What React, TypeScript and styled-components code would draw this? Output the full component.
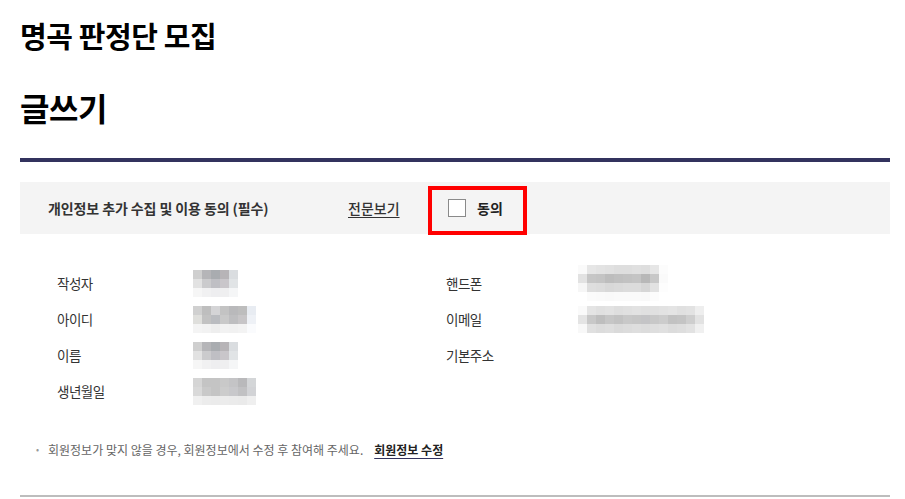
import React from "react";
import styled, { createGlobalStyle } from "styled-components";

const Global = createGlobalStyle`
  html, body { margin: 0; padding: 0; background: #fff; }
  body { font-family: "Noto Sans CJK KR", "Noto Sans", sans-serif; color: #222; }
`;

const Page = styled.div`
  width: 870px;
  margin-left: 20px;
`;

const Title = styled.h1`
  margin: 0;
  padding-top: 13px;
  font-size: 29px;
  font-weight: 700;
  line-height: 44px;
  letter-spacing: -0.4px;
  color: #000;
`;

const SubTitle = styled.h2`
  margin: 0;
  padding-top: 26px;
  font-size: 32px;
  font-weight: 700;
  line-height: 48px;
  letter-spacing: -0.5px;
  color: #000;
`;

const Divider = styled.div`
  margin-top: 27px;
  height: 4px;
  background: #33335e;
`;

const AgreeBar = styled.div`
  margin-top: 20px;
  height: 52px;
  background: #f4f4f4;
  display: flex;
  align-items: center;
  padding-left: 28px;
`;

const AgreeLabel = styled.span`
  width: 300px;
  font-size: 14px;
  font-weight: 700;
  color: #333;
  letter-spacing: -0.1px;
`;

const FullLink = styled.a`
  width: 100px;
  font-size: 14px;
  font-weight: 500;
  color: #333;
  text-decoration: underline;
  text-underline-offset: 3px;
`;

const CheckGroup = styled.label`
  position: relative;
  display: flex;
  align-items: center;
  gap: 11px;
  font-size: 14px;
  font-weight: 700;
  color: #222;
`;

const Box = styled.span`
  width: 16px;
  height: 16px;
  border: 1px solid #8a8a8a;
  background: #fff;
`;

const RedFrame = styled.span`
  position: absolute;
  left: -20px;
  top: -12px;
  width: 91px;
  height: 41px;
  border: 4px solid #ff0000;
  pointer-events: none;
`;

const Fields = styled.div`
  padding: 31px 0 0 37px;
  display: grid;
  grid-template-columns: 389px 1fr;
`;

const Column = styled.div`
  display: flex;
  flex-direction: column;
`;

const Row = styled.div`
  display: flex;
  align-items: center;
  height: 36px;
`;

const Label = styled.span<{ $w: number }>`
  width: ${(p) => p.$w}px;
  font-size: 13.5px;
  color: #333;
  letter-spacing: -0.5px;
`;

const Pixels = styled.div<{ $cols: number }>`
  display: grid;
  grid-template-columns: repeat(${(p) => p.$cols}, 9px);
  grid-auto-rows: 9px;
`;

const Note = styled.div`
  margin-top: 32px;
  padding-left: 16px;
  display: flex;
  align-items: center;
  font-size: 12px;
  color: #666;
`;

const Bullet = styled.span`
  width: 12px;
  color: #999;
  font-size: 9px;
`;

const EditLink = styled.a`
  margin-left: 11px;
  font-weight: 700;
  color: #222;
  text-decoration: underline;
  text-decoration-color: #33335e;
  text-underline-offset: 3px;
`;

const BottomLine = styled.div`
  margin-top: 37px;
  height: 2px;
  background: #bdbdbd;
`;

type Blur = string[][];

const nameBlur: Blur = [
  ["#cfcfcf", "#b5b5b8", "#a9acb0", "#b7b4b7", "#dadde0"],
  ["#e2e2e2", "#cbcbcd", "#bfbfc4", "#c9c6ca", "#e1e4e6"],
  ["#f6f6f6", "#f1f1f2", "#eeeef0", "#efeff0", "#f5f6f7"],
];
const idBlur: Blur = [
  ["#d0d0d0", "#bebebe", "#d4d4d6", "#c3c3c3", "#b9b9bb", "#bdbdbd", "#e8ecf2"],
  ["#dfdfdc", "#c2c2c2", "#babcc0", "#c9c9c9", "#bebec0", "#c7c5c7", "#eef1f6"],
  ["#f4f4f4", "#f2f2f2", "#eeeeee", "#f2f2f2", "#f1f1f1", "#f3f3f3", "#fafbfd"],
];
const birthBlur: Blur = [
  ["#d5d5d5", "#c4c4c4", "#c4c4c4", "#c9c9c9", "#c4c4c6", "#b9b9bb", "#d4d6d8"],
  ["#d9d9d9", "#c9c9c9", "#c4c4c4", "#cccccc", "#c8c8cb", "#c1c1c3", "#d2d3d6"],
  ["#f0f0f0", "#ececec", "#ebebeb", "#ececec", "#ebebeb", "#eaeaea", "#efefef"],
];
const phoneBlur: Blur = [
  ["#fafafa", "#e6e6e6", "#e3e3e3", "#e1e1e1", "#dedede", "#dedede", "#e0e0e0", "#dedede", "#e6e6e6", "#fcfcfc"],
  ["#e2e2e2", "#c6c6c6", "#c4c4c4", "#bdbdbd", "#c0c0c0", "#c2c2c2", "#c4c4c4", "#b8b8b8", "#c8c8c8", "#fafafa"],
  ["#f6f6f6", "#dedede", "#dcdcdc", "#d8d8d8", "#dadada", "#dcdcdc", "#dcdcdc", "#d6d6d6", "#e2e2e2", "#fdfdfd"],
  ["#ffffff", "#fbfbfb", "#fafafa", "#f9f9f9", "#fafafa", "#fafafa", "#fafafa", "#f9f9f9", "#fcfcfc", "#ffffff"],
];
const mailBlur: Blur = [
  ["#fafafa", "#e4e4e4", "#e0e0e0", "#e2e2e2", "#dedede", "#e0e0e0", "#e2e2e2", "#e0e0e0", "#e0e0e0", "#e2e2e2", "#e4e4e4", "#e0e0e0", "#e2e2e2", "#eeeeee"],
  ["#e4e4e4", "#c8c8c8", "#bebebe", "#c6c6c6", "#c2c2c2", "#c8c8c8", "#c6c6c6", "#c4c4c6", "#c8c8c8", "#cccccc", "#c2c2c2", "#c4c4c4", "#cecece", "#e2e2e2"],
  ["#f8f8f8", "#e0e0e0", "#dcdcdc", "#dedede", "#dadada", "#dcdcdc", "#dedede", "#dcdcdc", "#dedede", "#e0e0e0", "#dcdcdc", "#dedede", "#e2e2e2", "#f0f0f0"],
];

const PixelBlock = ({ data }: { data: Blur }) => (
  <Pixels $cols={data[0].length}>
    {data.flatMap((row, r) => row.map((c, i) => <span key={`${r}-${i}`} style={{ background: c }} />))}
  </Pixels>
);

const left: [string, Blur | null][] = [
  ["작성자", nameBlur],
  ["아이디", idBlur],
  ["이름", nameBlur],
  ["생년월일", birthBlur],
];
const right: [string, Blur | null][] = [
  ["핸드폰", phoneBlur],
  ["이메일", mailBlur],
  ["기본주소", null],
];

export default function App() {
  return (
    <Page>
      <Global />
      <Title>명곡 판정단 모집</Title>
      <SubTitle>글쓰기</SubTitle>
      <Divider />
      <AgreeBar>
        <AgreeLabel>개인정보 추가 수집 및 이용 동의 (필수)</AgreeLabel>
        <FullLink>전문보기</FullLink>
        <CheckGroup>
          <Box />
          동의
          <RedFrame />
        </CheckGroup>
      </AgreeBar>
      <Fields>
        <Column>
          {left.map(([l, b]) => (
            <Row key={l}>
              <Label $w={136}>{l}</Label>
              {b && <PixelBlock data={b} />}
            </Row>
          ))}
        </Column>
        <Column>
          {right.map(([l, b]) => (
            <Row key={l}>
              <Label $w={132}>{l}</Label>
              {b && <PixelBlock data={b} />}
            </Row>
          ))}
        </Column>
      </Fields>
      <Note>
        <Bullet>•</Bullet>
        회원정보가 맞지 않을 경우, 회원정보에서 수정 후 참여해 주세요.
        <EditLink>회원정보 수정</EditLink>
      </Note>
      <BottomLine />
    </Page>
  );
}
